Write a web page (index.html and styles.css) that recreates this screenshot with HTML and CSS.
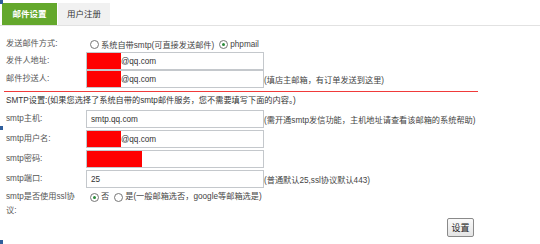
FILE: index.html
```html
<!DOCTYPE html>
<html lang="zh">
<head>
  <meta charset="UTF-8" />
  <title>邮件设置</title>
  <link rel="stylesheet" href="styles.css">
</head>
<body>
  <div class="tabs">
    <div class="tab active">邮件设置</div>
    <div class="tab">用户注册</div>
  </div>

  <div class="panel">
    <div class="row first">
      <div class="label">发送邮件方式:</div>
      <span class="radio"></span><span class="opt">系统自带smtp(可直接发送邮件)</span>
      <span class="radio on"></span><span class="opt">phpmail</span>
    </div>
    <div class="row">
      <div class="label">发件人地址:</div>
      <div class="field"><span class="mask"></span>@qq.com</div>
    </div>
    <div class="row">
      <div class="label">邮件抄送人:</div>
      <div class="field"><span class="mask"></span>@qq.com</div>
      <span class="note">(填店主邮箱，有订单发送到这里)</span>
    </div>

    <div class="section">SMTP设置:(如果您选择了系统自带的smtp邮件服务，您不需要填写下面的内容。)</div>

    <div class="row smtp">
      <div class="label">smtp主机:</div>
      <div class="field">smtp.qq.com</div>
      <span class="note">(需开通smtp发信功能，主机地址请查看该邮箱的系统帮助)</span>
    </div>
    <div class="row smtp">
      <div class="label">smtp用户名:</div>
      <div class="field"><span class="mask"></span>@qq.com</div>
    </div>
    <div class="row smtp">
      <div class="label">smtp密码:</div>
      <div class="field"><span class="mask long"></span></div>
    </div>
    <div class="row smtp">
      <div class="label">smtp端口:</div>
      <div class="field">25</div>
      <span class="note">(普通默认25,ssl协议默认443)</span>
    </div>
    <div class="row top">
      <div class="label">smtp是否使用ssl协议:</div>
      <span class="radio on"></span><span class="opt">否</span>
      <span class="radio"></span><span class="opt">是(一般邮箱选否，google等邮箱选是)</span>
    </div>

    <div class="actions">
      <button>设置</button>
    </div>
  </div>

  <span class="mark m1"></span>
  <span class="mark m2"></span>
  <span class="mark m3"></span>
</body>
</html>
```

FILE: styles.css
```css
body {
  margin: 0;
  font-family: "Liberation Sans", "Noto Sans CJK SC", sans-serif;
  font-size: 8.2px;
  color: #444;
  background: #fff;
}

.tabs {
  display: flex;
  gap: 1px;
  padding: 3px 0 0 2px;
  height: 22px;
  border-bottom: 1px solid #e2e2e2;
}
.tab {
  width: 52px;
  line-height: 22px;
  text-align: center;
  font-size: 8.5px;
  background: #f1f1f1;
  color: #333;
}
.tab.active {
  width: 55px;
  background: #64a82c;
  color: #fff;
  font-weight: bold;
}

.panel { width: 474px; padding: 0 0 0 4px; }

.row {
  display: flex;
  align-items: center;
  height: 18px;
  white-space: nowrap;
}
.row.first { height: 16px; margin-top: 10px; }
.row.smtp { margin-bottom: 2px; }
.row.top {
  height: 28px;
  align-items: flex-start;
  margin-top: 1px;
}
.row.top .label {
  white-space: normal;
  width: 72px;
  padding-right: 8px;
}
.row.top .radio { margin-top: 3px; }
.row.top .opt { line-height: 14px; }

.label {
  width: 80px;
  padding-left: 2px;
  line-height: 14px;
  color: #555;
}

.field {
  box-sizing: border-box;
  width: 178px;
  height: 18px;
  border: 1px solid #c4c8cc;
  display: flex;
  align-items: center;
  padding-left: 4px;
  color: #333;
}
.mask {
  width: 34px;
  height: 16px;
  margin-left: -4px;
  background: #ff0000;
}
.mask.long { width: 55px; }

.note { color: #444; }

.radio {
  box-sizing: border-box;
  width: 9px;
  height: 9px;
  border: 1px solid #777;
  border-radius: 50%;
  margin: 0 2px 0 4px;
  display: inline-flex;
  align-items: center;
  justify-content: center;
}
.radio.on::after {
  content: "";
  width: 3px;
  height: 3px;
  border-radius: 50%;
  background: #2a8a3a;
}
.opt { margin-right: 1px; }

.section {
  border-top: 1px solid #f03a3a;
  margin-top: 3px;
  padding: 3px 0 0 2px;
  height: 15px;
  line-height: 11px;
  color: #333;
}

.actions {
  display: flex;
  justify-content: flex-end;
  padding-right: 4px;
}
button {
  font-family: inherit;
  font-size: 9px;
  width: 27px;
  height: 19px;
  padding: 0;
  color: #222;
  background: linear-gradient(#fafafa, #e4e4e4);
  border: 1px solid #8a8a8a;
  border-radius: 2px;
}

.mark {
  position: absolute;
  left: 0;
  width: 3px;
  height: 4px;
  background: #2f5e9c;
}
.m1 { top: 0; }
.m2 { top: 126px; }
.m3 { top: 240px; }
```
